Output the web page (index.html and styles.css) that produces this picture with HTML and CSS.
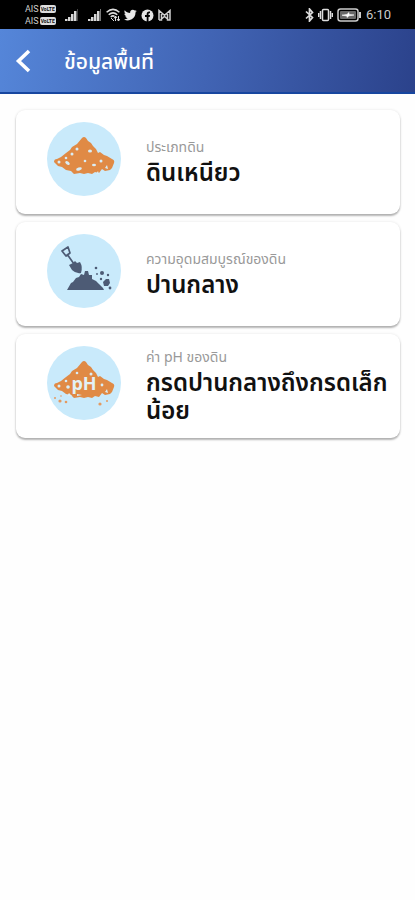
FILE: index.html
```html
<!DOCTYPE html>
<html lang="th">
<head>
<meta charset="utf-8">
<meta name="viewport" content="width=device-width, initial-scale=1">
<title>ข้อมูลพื้นที่</title>
<link rel="stylesheet" href="styles.css">
</head>
<body>
<div class="status">
  <div class="status-left">
    <div class="carriers">
      <div class="carrier">AIS<span class="volte">VoLTE</span></div>
      <div class="carrier">AIS<span class="volte">VoLTE</span></div>
    </div>
    <svg class="signal" width="14" height="14" viewBox="0 0 14 14"><path d="M0 13v-2h2.500v2zM3 13V9h2.500v4zM6 13V6h2.500v7zM9 13V3h2.500v10z" fill="#d8d8d8"/><path d="M12 13V1h1v12z" fill="#444"/></svg>
    <svg class="signal" width="14" height="14" viewBox="0 0 14 14"><path d="M0 13v-2h2.500v2zM3 13V9h2.500v4zM6 13V6h2.500v7zM9 13V3h2.500v10z" fill="#d8d8d8"/><path d="M12 13V1h1v12z" fill="#777"/></svg>
    <svg width="14" height="14" viewBox="0 0 14 14" fill="none" stroke="#ddd" stroke-width="1.5"><path d="M.6 4.2Q7-1.4 13.4 4.2M2.7 6.7Q7 3 11.3 6.7M4.7 9Q7 7 8.5 8.6"/><path d="M5 10l3 3M9.500 8v5M12.500 13V8M8 10.500l1.500-2.500 1.500 2M11 11l1.500 2 1.500-2" stroke-width="1"/></svg>
    <svg width="13" height="12" viewBox="0 0 24 22"><path fill="#e8e8e8" d="M23.600 3.600c-.9.400-1.800.6-2.800.8 1-.6 1.800-1.600 2.200-2.700-1 .6-2 1-3.100 1.200A4.900 4.900 0 0 0 11.500 7.400C7.500 7.200 3.800 5.300 1.400 2.200c-1.300 2.200-.7 5.100 1.500 6.600-.8 0-1.500-.2-2.200-.6 0 2.300 1.600 4.400 3.900 4.900-.7.2-1.500.2-2.200.1.600 2 2.400 3.400 4.600 3.400A10 10 0 0 1-.2 18.700 14 14 0 0 0 21.200 6.200c.9-.7 1.700-1.600 2.400-2.600z"/></svg>
    <svg width="13" height="13" viewBox="0 0 13 13"><circle cx="6.500" cy="6.500" r="6" fill="#e4e4e4"/><path d="M5.700 13V8H4V6h1.700V5c0-1.800 1-2.700 3.300-2.400v1.700c-1.100-.1-1.500.1-1.500.9V6H9l-.3 2H7.500v5z" fill="#000"/></svg>
    <svg width="13" height="12" viewBox="0 0 13 12" fill="none" stroke="#d0d0d0" stroke-width="1.500"><path d="M1 11V1.500l5.500 4.800L12 1.500V11H9.500V5M1 11h2.500V5M3.500 10l3-2.500 3 2.500"/></svg>
  </div>
  <div class="status-right">
    <svg width="9" height="14" viewBox="0 0 9 14" fill="none" stroke="#ddd" stroke-width="1.700"><path d="M1 3.500l6.500 6L4.500 13V1l3 3.500-6.500 6"/></svg>
    <svg width="15" height="14" viewBox="0 0 15 14" fill="none" stroke="#ddd" stroke-width="1.500"><rect x="4.500" y="1.500" width="6" height="11" rx="1"/><path d="M2.500 3v8M12.500 3v8M.6 5v4M14.400 5v4"/></svg>
    <svg width="25" height="14" viewBox="0 0 25 14"><rect x="1" y="1" width="20" height="12" rx="2.500" fill="none" stroke="#ccc" stroke-width="1.500"/><rect x="3" y="3" width="16" height="8" rx="1" fill="#686868"/><path d="M23 4v6" stroke="#ccc" stroke-width="2"/><path d="M5 7.200l5-.8L12 4.500v2l5 .5-5 .8L10 9.500V8z" fill="#fff" stroke="#fff" stroke-width=".6"/></svg>
    <span class="clock">6:10</span>
  </div>
</div>
<header class="appbar">
  <button class="back" type="button" aria-label="ย้อนกลับ">
    <svg width="16" height="24" viewBox="0 0 16 24" fill="none" stroke="#fff" stroke-width="3.600"><path d="M14 2L3.500 12 14 22"/></svg>
  </button>
  <h1>ข้อมูลพื้นที่</h1>
</header>
<main class="cards">
  <section class="card">
    <svg class="pic" viewBox="0 0 74 74">
      <circle cx="37" cy="37" r="37" fill="#c9eafb"/>
      <path id="heap" d="M35 16Q37 14 39 16L41 19 44 21 46 24 49 27 51 31 53 30 57 33 60 34 65 37Q68 38 67 41L65 46 63 48 58 49 55 47 52 51 48 50 45 52 41 51 37 52 33 51 27 52 24 49 19 48 15 45 11 44 7 40Q7 37 10 37L14 35 19 31 23 28 25 25 30 22Z" fill="#e08a45"/>
      <g fill="#d9edf5"><circle cx="30" cy="27" r="1.500"/><ellipse cx="43" cy="29" rx="2" ry="1.500"/><circle cx="25" cy="32" r="1.500"/><circle cx="19" cy="36" r="1.300"/><circle cx="12" cy="40" r="1.500"/><ellipse cx="20.500" cy="41" rx="2.500" ry="1.600" transform="rotate(35 20.500 41)"/><circle cx="38" cy="39" r="1.300"/><circle cx="54" cy="39" r="1.500"/><ellipse cx="47" cy="43" rx="2" ry="1.300"/><ellipse cx="32" cy="47" rx="3" ry="1.500" transform="rotate(-20 32 47)"/><path d="M58 46l2-3 1 4zM49 52l2-3 1 3z"/></g>
    </svg>
    <div class="text"><p class="label">ประเภทดิน</p><p class="value">ดินเหนียว</p></div>
  </section>
  <section class="card">
    <svg class="pic" viewBox="0 0 74 74">
      <circle cx="37" cy="37" r="37" fill="#c9eafb"/>
      <g fill="none" stroke="#4d5b75" stroke-width="1.700" stroke-linejoin="round"><path d="M15 17l6-4 2 6-4 3zM20 20l7 10"/></g>
      <path d="M22 31l4-2 2-2 2 2 3-1q3 5 1 11-5 1-9-3z" fill="#4d5b75"/>
      <path d="M20 56L24 49 26 48 29 44 32 43 34 40 37 41 38 37H41L42 41 45 41V45L49 47 52 50 56 54 57 56Z" fill="#4d5b75"/>
      <g fill="#4d5b75"><circle cx="49" cy="34" r="1.300"/><circle cx="55" cy="39" r="2"/><circle cx="61" cy="41" r="1.200"/><circle cx="50" cy="40" r=".9"/><circle cx="54" cy="45" r="1.200"/><path d="M56 48l3-3 3 0 1 4-2 3-4 0z"/><circle cx="63" cy="54" r="1.400"/></g>
    </svg>
    <div class="text"><p class="label">ความอุดมสมบูรณ์ของดิน</p><p class="value">ปานกลาง</p></div>
  </section>
  <section class="card">
    <svg class="pic" viewBox="0 0 74 74">
      <circle cx="37" cy="37" r="37" fill="#c9eafb"/>
      <use href="#heap"/>
      <g fill="#d9edf5"><circle cx="30" cy="27" r="1.300"/><circle cx="44" cy="28" r="1.500"/><circle cx="19" cy="35" r="1.300"/><circle cx="12" cy="40" r="1.500"/><circle cx="21" cy="41" r="1.800"/><circle cx="55" cy="39" r="1.400"/><path d="M20 50l2-3 3 3zM30 48l5 1-5 1zM58 46l2-3 1 4z"/></g>
      <g fill="#e39a61"><circle cx="8" cy="52" r="1"/><circle cx="13" cy="55" r="1.600"/><circle cx="19" cy="56" r="1.300"/><circle cx="14" cy="50" r=".8"/><circle cx="53" cy="58" r="1.600"/><circle cx="60" cy="55" r="1"/></g>
      <text class="ph" x="37" y="44" text-anchor="middle">pH</text>
    </svg>
    <div class="text"><p class="label">ค่า pH ของดิน</p><p class="value">กรดปานกลางถึงกรดเล็กน้อย</p></div>
  </section>
</main>
</body>
</html>
```
FILE: styles.css
```css
* { box-sizing: border-box; }
body {
  margin: 0;
  min-height: 100vh;
  background: #fefefe;
  color: #111;
  font-family: "Noto Sans Thai", Kanit, Prompt, "Noto Sans", sans-serif;
}
h1, p { margin: 0; }
svg { flex: none; display: block; }

.status {
  display: flex;
  justify-content: space-between;
  height: 29px;
  padding: 1px 24px 0 25px;
  background: #000;
  color: #ccc;
}
.status-left, .status-right { display: flex; align-items: center; gap: 4px; }
.carriers { margin-right: 5px; }
.carrier {
  display: flex;
  align-items: center;
  gap: 1px;
  height: 12px;
  font: 9px/12px Roboto, sans-serif;
}
.volte {
  padding: 0 1px;
  border-radius: 2px;
  background: #ddd;
  color: #111;
  font: bold 5px/8px Roboto, sans-serif;
}
.signal { margin-right: 5px; }
.signal + .signal { margin-right: 0; }
.clock { font: 13px/16px Roboto, sans-serif; }

.appbar {
  display: flex;
  align-items: center;
  gap: 25px;
  height: 65px;
  padding-left: 7px;
  border-bottom: 2px solid #17469f;
  background: linear-gradient(100deg, #5586d9, #4164b4 50%, #2b428b);
  color: #fff;
}
.back {
  display: flex;
  justify-content: center;
  width: 32px;
  padding: 4px 0;
  border: 0;
  background: none;
}
h1 { padding-top: 4px; font-size: 21px; line-height: 32px; font-weight: 500; }

.cards {
  display: flex;
  flex-direction: column;
  gap: 8px;
  padding: 16px 15px 16px 16px;
}
.card {
  display: flex;
  align-items: center;
  gap: 25px;
  min-height: 104px;
  padding: 12px 8px 12px 31px;
  border-radius: 9px;
  background: #fff;
  box-shadow: 0 2px 2px rgba(0, 0, 0, .28), 0 0 3px rgba(0, 0, 0, .1);
}
.pic { width: 74px; height: 74px; align-self: flex-start; }
.text { display: flex; flex-direction: column; gap: 2px; min-width: 0; padding-top: 2px; }
.label { color: #999; font-size: 14px; line-height: 20px; }
.value { font-size: 24px; line-height: 28px; font-weight: 600; }
.ph { fill: #e3f1f6; font: bold 18px "Open Sans", sans-serif; }
```
